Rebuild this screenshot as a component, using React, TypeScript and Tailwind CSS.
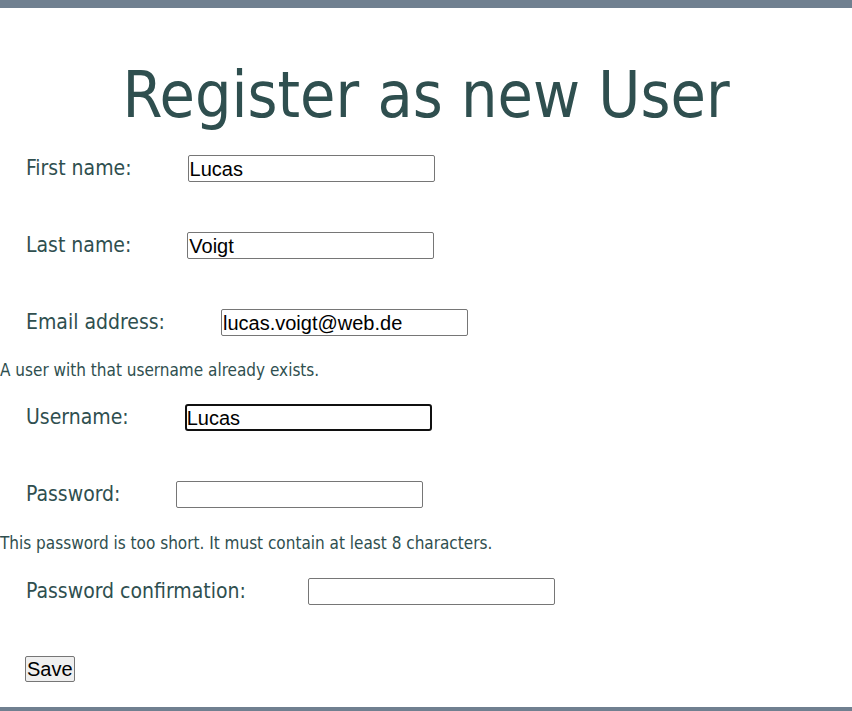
export default function App() {
  const label = "text-[21px] text-[#2f4f4f] mr-[56px] leading-none";
  const input =
    "w-[247px] h-[27px] border border-[#767676] rounded-[2px] px-[1px] text-[20px] text-black bg-white outline-none";
  const arial = { fontFamily: '"Liberation Sans", Arial, sans-serif' };

  return (
    <div
      className="min-h-[711px] flex flex-col bg-white text-[#2f4f4f]"
      style={{ fontFamily: '"DejaVu Sans Condensed", "DejaVu Sans", sans-serif' }}
    >
      <div className="h-[8px] bg-[#708090]" />
      <div className="flex-1">
        <h1 className="text-center text-[64px] leading-none mt-[55px]">Register as new User</h1>

        <form className="mt-[28px]">
          <div className="flex items-center pl-[26px] h-[27px]">
            <span className={label}>First name:</span>
            <input className={input} style={arial} defaultValue="Lucas" />
          </div>
          <div className="flex items-center pl-[26px] h-[27px] mt-[50px]">
            <span className={label}>Last name:</span>
            <input className={input} style={arial} defaultValue="Voigt" />
          </div>
          <div className="flex items-center pl-[26px] h-[27px] mt-[50px]">
            <span className={label}>Email address:</span>
            <input className={input} style={arial} defaultValue="lucas.voigt@web.de" />
          </div>
          <p className="text-[17px] mt-[26px] leading-none">A user with that username already exists.</p>
          <div className="flex items-center pl-[26px] h-[27px] mt-[25px]">
            <span className={label}>Username:</span>
            <input
              className="w-[247px] h-[27px] border-2 border-[#101010] rounded-[3px] px-0 text-[20px] text-black bg-white outline-none"
              style={arial}
              defaultValue="Lucas"
            />
          </div>
          <div className="flex items-center pl-[26px] h-[27px] mt-[50px]">
            <span className={label}>Password:</span>
            <input type="password" className={input} style={arial} />
          </div>
          <p className="text-[17px] mt-[27px] leading-none">This password is too short. It must contain at least 8 characters.</p>
          <div className="flex items-center pl-[26px] h-[27px] mt-[26px]">
            <span className="text-[21px] text-[#2f4f4f] mr-[62px] leading-none">Password confirmation:</span>
            <input type="password" className={input} style={arial} />
          </div>
          <div className="pl-[25px] mt-[51px]">
            <button
              type="button"
              className="h-[26px] px-[1px] border border-[#767676] rounded-[2px] bg-[#efefef] text-[20px] text-black leading-none"
              style={arial}
            >
              Save
            </button>
          </div>
        </form>
      </div>
      <div className="h-[4px] bg-[#708090]" />
    </div>
  );
}
